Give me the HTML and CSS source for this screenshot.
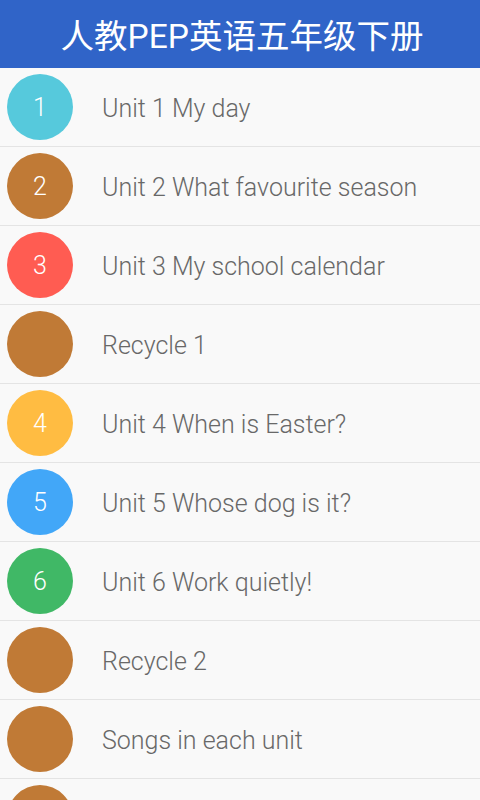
FILE: index.html
```
<!DOCTYPE html>
<html lang="zh">
<head>
<meta charset="utf-8">
<link rel="stylesheet" href="styles.css">
</head>
<body>
<header class="bar">人教PEP英语五年级下册</header>
<ul class="list">
  <li class="row"><span class="dot c-cyan">1</span><span class="label">Unit 1 My day</span></li>
  <li class="row"><span class="dot c-brown">2</span><span class="label">Unit 2 What favourite season</span></li>
  <li class="row"><span class="dot c-red">3</span><span class="label">Unit 3 My school calendar</span></li>
  <li class="row"><span class="dot c-brown"></span><span class="label">Recycle 1</span></li>
  <li class="row"><span class="dot c-yellow">4</span><span class="label">Unit 4 When is Easter?</span></li>
  <li class="row"><span class="dot c-blue">5</span><span class="label">Unit 5 Whose dog is it?</span></li>
  <li class="row"><span class="dot c-green">6</span><span class="label">Unit 6 Work quietly!</span></li>
  <li class="row"><span class="dot c-brown"></span><span class="label">Recycle 2</span></li>
  <li class="row"><span class="dot c-brown"></span><span class="label">Songs in each unit</span></li>
  <li class="row"><span class="dot c-brown"></span></li>
</ul>
</body>
</html>
```
FILE: styles.css
```
html, body {
  margin: 0;
  padding: 0;
}
body {
  width: 480px;
  height: 800px;
  overflow: hidden;
  background: #f9f9f9;
  font-family: Roboto, "Noto Sans CJK SC", sans-serif;
}
.bar {
  height: 68px;
  background: #3064c8;
  color: #fff;
  display: flex;
  align-items: center;
  justify-content: center;
  font-size: 33.5px;
  padding-left: 4px;
  padding-bottom: 2px;
  box-sizing: border-box;
}
.list {
  list-style: none;
  margin: 0;
  padding: 0;
}
.row {
  height: 78px;
  border-bottom: 1px solid #e4e4e4;
  display: flex;
  align-items: center;
}
.dot {
  flex: none;
  width: 66px;
  height: 66px;
  border-radius: 50%;
  margin-left: 7px;
  margin-right: 29px;
  display: flex;
  align-items: center;
  justify-content: center;
  color: #fff;
  font-size: 25px;
  font-weight: 300;
}
.label {
  color: #686868;
  font-size: 25px;
  font-weight: 300;
  padding-top: 2px;
}
.c-cyan { background: #56c9dc; }
.c-brown { background: #c07a36; }
.c-red { background: #ff5c52; }
.c-yellow { background: #ffbc42; }
.c-blue { background: #42a7f8; }
.c-green { background: #40b866; }
```
